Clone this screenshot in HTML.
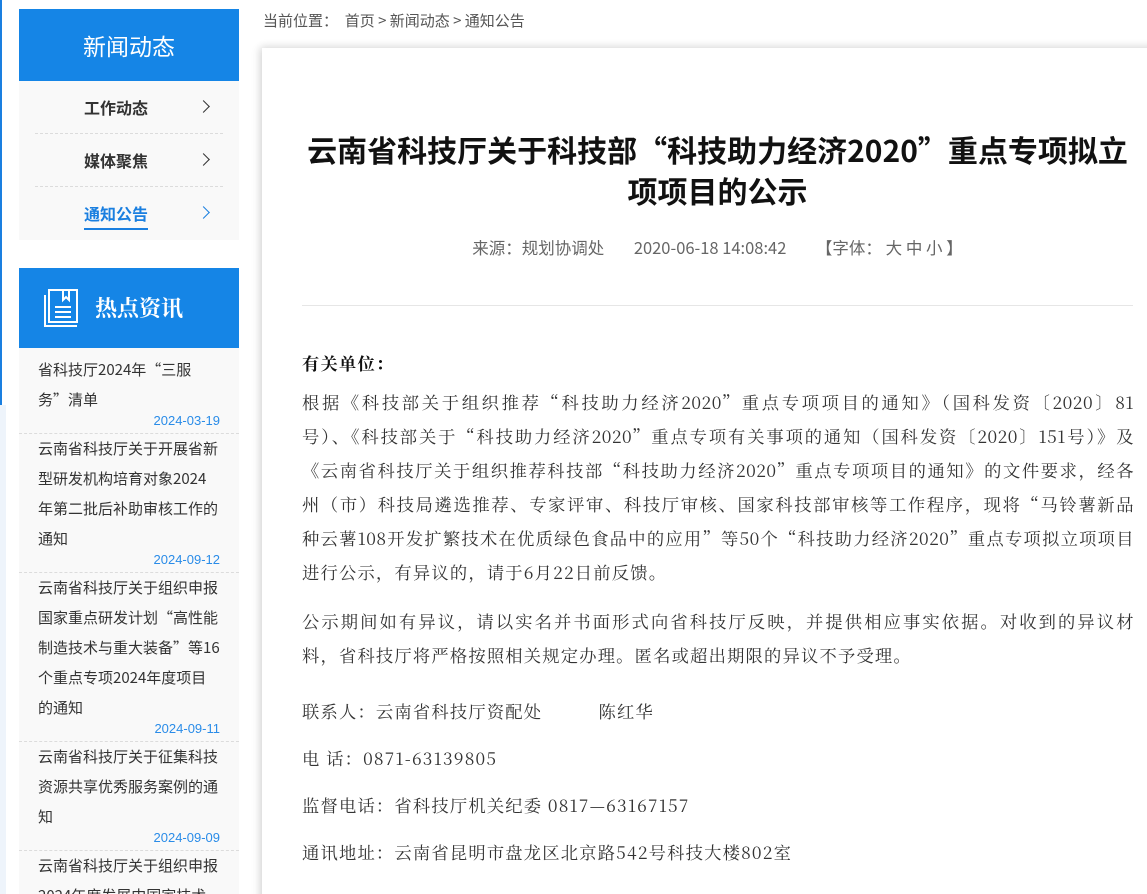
<!DOCTYPE html>
<html><head><meta charset="utf-8">
<style>
*{margin:0;padding:0;box-sizing:border-box}
html,body{width:1147px;height:894px;overflow:hidden}
body{background:#fff;font-family:"Noto Sans CJK SC","Liberation Sans",sans-serif;position:relative}
.lstrip{position:absolute;left:0;top:0;width:2px;height:405px;background:#1a7fe0}
.lbg{position:absolute;left:0;top:405px;width:6px;height:489px;background:#eef4fb}
.side{position:absolute;left:19px;top:9px;width:220px;height:885px;overflow:hidden}
.h1{height:72px;background:#1585e6;color:#fff;font-size:23px;text-align:center;line-height:72px}
.menu{background:#f9f9f9;padding:0 16px;height:159px}
.mi{height:53px;border-bottom:1px dashed #dcdcdc;position:relative;font-size:16px;font-weight:bold;color:#333;line-height:52px;padding-left:49px}
.mi:last-child{border-bottom:none}
.mi .ar{position:absolute;left:164px;top:21px;width:9px;height:9px;border-top:1.6px solid #333;border-right:1.6px solid #333;transform:rotate(45deg)}
.mi.on{color:#1a7fe0}
.mi.on span{border-bottom:2px solid #1a7fe0;padding-bottom:3px}
.mi.on .ar{border-color:#1a7fe0}
.h2{margin-top:28px;height:80px;background:#1585e6;color:#fff;font-size:22px;font-weight:bold;font-family:"Noto Serif CJK SC",serif;line-height:80px;padding-left:76px;position:relative}
.h2 svg{position:absolute;left:19px;top:19px}
.list{background:#f9f9f9}
.it{padding:7px 19px 0 19px;border-bottom:1px dashed #dcdcdc;font-size:15px;color:#333;line-height:30px}
.it .d{text-align:right;color:#2a8ce8;font-family:"Liberation Sans",sans-serif;font-size:13px;line-height:12px;padding-bottom:6px}
.crumb{position:absolute;left:263px;top:10px;font-size:15px;color:#555}
.card{position:absolute;left:262px;top:48px;width:900px;height:860px;background:#fff;box-shadow:-3px 0 8px rgba(0,0,0,.12),0 -3px 8px rgba(0,0,0,.06)}
.title{position:absolute;left:302px;top:129px;width:831px;text-align:center;font-size:30px;font-weight:bold;color:#111;line-height:41px}
.meta{position:absolute;left:302px;top:235px;width:831px;text-align:center;font-size:16.5px;color:#666;white-space:pre}
.hr{position:absolute;left:302px;top:305px;width:831px;height:1px;background:#e6e6e6}
.body{position:absolute;left:302px;top:346px;width:832px;font-family:"Noto Serif CJK SC","Liberation Serif",serif;font-size:17.3px;letter-spacing:1.2px;color:#333;line-height:34px}
.body p{margin-bottom:13px}
.j{display:block;white-space:nowrap;text-align:justify;text-align-last:justify;letter-spacing:0.5px}
</style></head><body>
<div class="lstrip"></div><div class="lbg"></div>
<div class="side">
<div class="h1">新闻动态</div>
<div class="menu">
<div class="mi"><span>工作动态</span><i class="ar"></i></div>
<div class="mi"><span>媒体聚焦</span><i class="ar"></i></div>
<div class="mi on"><span>通知公告</span><i class="ar"></i></div>
</div>
<div class="h2"><svg width="42" height="42" viewBox="0 0 42 42" fill="none" stroke="#fff" stroke-width="2"><path d="M7 8v31h32"/><rect x="11" y="3" width="28" height="32"/><path d="M25 3v10l3-3 3 3V3"/><path d="M17 20h16M17 25h16M17 30h16"/></svg>热点资讯</div>
<div class="list">
<div class="it">省科技厅2024年“三服务”清单<div class="d">2024-03-19</div></div>
<div class="it" style="padding-top:0">云南省科技厅关于开展省新型研发机构培育对象2024年第二批后补助审核工作的通知<div class="d">2024-09-12</div></div>
<div class="it" style="padding-top:0">云南省科技厅关于组织申报国家重点研发计划“高性能制造技术与重大装备”等16个重点专项2024年度项目的通知<div class="d">2024-09-11</div></div>
<div class="it" style="padding-top:0">云南省科技厅关于征集科技资源共享优秀服务案例的通知<div class="d">2024-09-09</div></div>
<div class="it" style="padding-top:0">云南省科技厅关于组织申报2024年度发展中国家技术培训班项目的通知<div class="d">2024-09-05</div></div>
</div>
</div>
<div class="crumb">当前位置：&nbsp; 首页 &gt; 新闻动态 &gt; 通知公告</div>
<div class="card"></div>
<div class="title">云南省科技厅关于科技部“科技助力经济2020”重点专项拟立项项目的公示</div>
<div class="meta">来源：规划协调处        2020-06-18 14:08:42        【字体： 大 中 小 】</div>
<div class="hr"></div>
<div class="body">
<p style="margin-bottom:5px"><b style="color:#111">有关单位：</b></p>
<p style="margin-bottom:15px"><span class="j">根据《科技部关于组织推荐“科技助力经济2020”重点专项项目的通知》（国科发资〔2020〕81</span><span class="j">号）、《科技部关于“科技助力经济2020”重点专项有关事项的通知（国科发资〔2020〕151号）》及</span><span class="j">《云南省科技厅关于组织推荐科技部“科技助力经济2020”重点专项项目的通知》的文件要求，经各</span><span class="j">州（市）科技局遴选推荐、专家评审、科技厅审核、国家科技部审核等工作程序，现将“马铃薯新品</span><span class="j">种云薯108开发扩繁技术在优质绿色食品中的应用”等50个“科技助力经济2020”重点专项拟立项项目</span>进行公示，有异议的，请于6月22日前反馈。</p>
<p style="margin-bottom:22px"><span class="j">公示期间如有异议，请以实名并书面形式向省科技厅反映，并提供相应事实依据。对收到的异议材</span>料，省科技厅将严格按照相关规定办理。匿名或超出期限的异议不予受理。</p>
<p>联系人：云南省科技厅资配处&nbsp;&nbsp;&nbsp;&nbsp;&nbsp;&nbsp;&nbsp;&nbsp;&nbsp; 陈红华</p>
<p>电 话：0871-63139805</p>
<p>监督电话：省科技厅机关纪委 0817—63167157</p>
<p>通讯地址：云南省昆明市盘龙区北京路542号科技大楼802室</p>
</div>
</body></html>
